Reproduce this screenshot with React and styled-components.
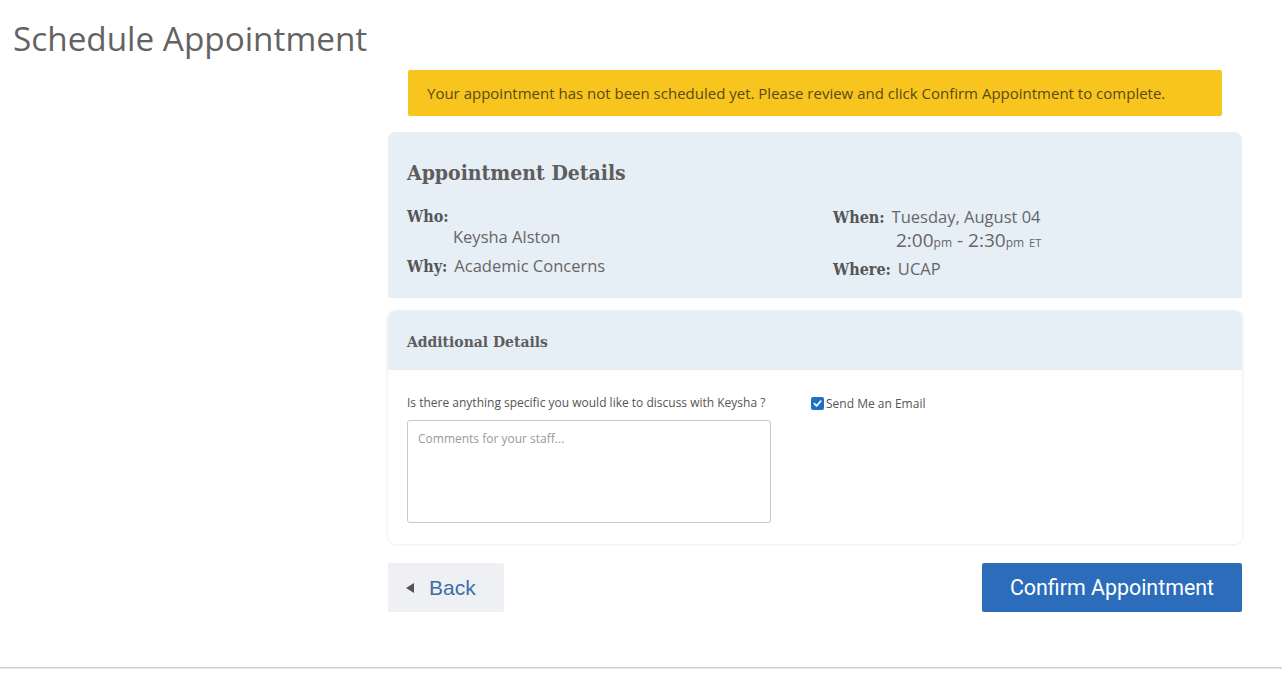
import React from "react";
import styled, { createGlobalStyle } from "styled-components";

const Global = createGlobalStyle`
  html, body { margin: 0; padding: 0; background: #fff; }
  body { font-family: "Open Sans", "Noto Sans", sans-serif; color: #666; }
  * { box-sizing: border-box; }
`;

const Page = styled.div`
  width: 1282px;
  min-height: 699px;
  display: flex;
  flex-direction: column;
`;

const Title = styled.h1`
  margin: 0;
  padding: 15px 0 0 13px;
  font-family: "Open Sans", sans-serif;
  font-weight: 400;
  font-size: 33.3px;
  line-height: 46px;
  color: #636363;
`;

const Layout = styled.div`
  display: grid;
  grid-template-columns: 388px 854px;
  padding-top: 9px;
`;

const Column = styled.div`
  grid-column: 2;
  display: flex;
  flex-direction: column;
`;

const Banner = styled.div`
  margin: 0 20px;
  height: 46px;
  background: #f8c51f;
  border-radius: 2px;
  display: flex;
  align-items: center;
  padding: 0 19px;
  font-size: 15px;
  color: #5a4a14;
`;

const Panel = styled.section`
  margin-top: 16px;
  background: #e6eef6;
  border-radius: 8px 8px 0 0;
  padding: 26px 19px 18px;
  height: 166px;
`;

const PanelTitle = styled.h2`
  margin: 0;
  font-family: "DejaVu Serif Condensed", "DejaVu Serif", serif;
  font-weight: 700;
  font-size: 21px;
  line-height: 30px;
  color: #5d5d5d;
`;

const InfoGrid = styled.div`
  margin-top: 19px;
  display: grid;
  grid-template-columns: 426px 1fr;
`;

const InfoCol = styled.div`
  display: flex;
  flex-direction: column;
  gap: ${p => p.$gap || 4}px;
`;

const Field = styled.div`
  display: flex;
  align-items: baseline;
  flex-wrap: ${p => (p.$stack ? "wrap" : "nowrap")};
`;

const Label = styled.span`
  font-family: "DejaVu Serif Condensed", "DejaVu Serif", serif;
  font-weight: 700;
  font-size: 16px;
  color: #555;
  margin-right: 7px;
  line-height: 20px;
`;

const Value = styled.span`
  font-size: 16.5px;
  color: #666;
  line-height: 20px;
`;

const Indented = styled.div`
  padding-left: ${p => p.$indent}px;
  font-size: ${p => p.$size || 16.5}px;
  color: #666;
  line-height: ${p => p.$lh || 20}px;
  width: 100%;
`;

const Small = styled.span`
  font-size: ${p => p.$size || 12}px;
`;

const WhenBlock = styled.div`
  display: flex;
  flex-direction: column;
`;

const Section = styled.section`
  margin-top: 13px;
  border-radius: 8px;
  box-shadow: 0 0 3px rgba(160, 180, 200, 0.45);
  overflow: hidden;
`;

const SectionHeader = styled.div`
  background: #e6eef6;
  height: 63px;
  display: flex;
  align-items: center;
  padding: 2px 19px 0;
  border-bottom: 4px solid #fff;
`;

const SectionTitle = styled.h3`
  margin: 0;
  font-family: "DejaVu Serif Condensed", "DejaVu Serif", serif;
  font-weight: 700;
  font-size: 15.5px;
  color: #5d5d5d;
`;

const SectionBody = styled.div`
  background: #fff;
  padding: 21px 19px 19px;
  display: grid;
  grid-template-columns: 404px 1fr;
  height: 170px;
`;

const FieldLabel = styled.label`
  display: block;
  font-size: 12px;
  color: #555;
  line-height: 16px;
  margin-bottom: 9px;
`;

const TextArea = styled.textarea`
  display: block;
  width: 364px;
  height: 103px;
  border: 1px solid #c8c8c8;
  border-radius: 3px;
  resize: none;
  padding: 9px 10px;
  font-family: "Open Sans", sans-serif;
  font-size: 12px;
  color: #555;
  &::placeholder { color: #9a9a9a; }
`;

const CheckRow = styled.label`
  display: flex;
  align-items: center;
  gap: 2px;
  font-size: 12px;
  color: #555;
  height: 16px;
`;

const CheckBox = styled.span`
  width: 13px;
  height: 13px;
  border-radius: 2px;
  background: #1f6fc5;
  display: inline-flex;
  align-items: center;
  justify-content: center;
`;

const Actions = styled.div`
  margin-top: 19px;
  display: flex;
  justify-content: space-between;
`;

const BackButton = styled.button`
  width: 116px;
  height: 49px;
  border: none;
  border-radius: 2px;
  background: #eef0f3;
  display: flex;
  align-items: center;
  gap: 15px;
  padding: 0 0 0 18px;
  font-family: "Liberation Sans", Arial, sans-serif;
  font-size: 21px;
  color: #3b6fa8;
  cursor: pointer;
`;

const Arrow = styled.span`
  width: 0;
  height: 0;
  border-top: 5.5px solid transparent;
  border-bottom: 5.5px solid transparent;
  border-right: 8px solid #555;
`;

const ConfirmButton = styled.button`
  width: 260px;
  height: 49px;
  border: none;
  border-radius: 2px;
  background: #2b6dba;
  color: #fff;
  font-family: Roboto, "Open Sans", sans-serif;
  font-size: 21.4px;
  cursor: pointer;
`;

const Footer = styled.hr`
  margin: 55px 0 0;
  border: none;
  border-top: 1px solid #cfcfcf;
  border-bottom: 1px solid #e8e8e8;
  height: 0;
`;

export default function App() {
  return (
    <Page>
      <Global />
      <Title>Schedule Appointment</Title>
      <Layout>
        <Column>
          <Banner>
            Your appointment has not been scheduled yet. Please review and click Confirm Appointment to complete.
          </Banner>
          <Panel>
            <PanelTitle>Appointment Details</PanelTitle>
            <InfoGrid>
              <InfoCol $gap={9}>
                <Field $stack>
                  <Label>Who:</Label>
                  <Indented $indent={46}>Keysha Alston</Indented>
                </Field>
                <Field>
                  <Label>Why:</Label>
                  <Value>Academic Concerns</Value>
                </Field>
              </InfoCol>
              <InfoCol $gap={4}>
                <WhenBlock>
                  <Field>
                    <Label>When:</Label>
                    <Value>Tuesday, August 04</Value>
                  </Field>
                  <Indented $indent={63} $size={19} $lh={24}>
                    2:00<Small $size={12}>pm</Small> - 2:30<Small $size={12}>pm</Small> <Small $size={11}>ET</Small>
                  </Indented>
                </WhenBlock>
                <Field>
                  <Label>Where:</Label>
                  <Value>UCAP</Value>
                </Field>
              </InfoCol>
            </InfoGrid>
          </Panel>
          <Section>
            <SectionHeader>
              <SectionTitle>Additional Details</SectionTitle>
            </SectionHeader>
            <SectionBody>
              <div>
                <FieldLabel>Is there anything specific you would like to discuss with Keysha ?</FieldLabel>
                <TextArea placeholder="Comments for your staff..." />
              </div>
              <div>
                <CheckRow>
                  <CheckBox>
                    <svg width="9" height="9" viewBox="0 0 10 10">
                      <path d="M1.5 5.2 L4 7.6 L8.6 2.4" fill="none" stroke="#fff" strokeWidth="1.8" strokeLinecap="round" strokeLinejoin="round" />
                    </svg>
                  </CheckBox>
                  Send Me an Email
                </CheckRow>
              </div>
            </SectionBody>
          </Section>
          <Actions>
            <BackButton>
              <Arrow />
              Back
            </BackButton>
            <ConfirmButton>Confirm Appointment</ConfirmButton>
          </Actions>
        </Column>
      </Layout>
      <Footer />
    </Page>
  );
}
